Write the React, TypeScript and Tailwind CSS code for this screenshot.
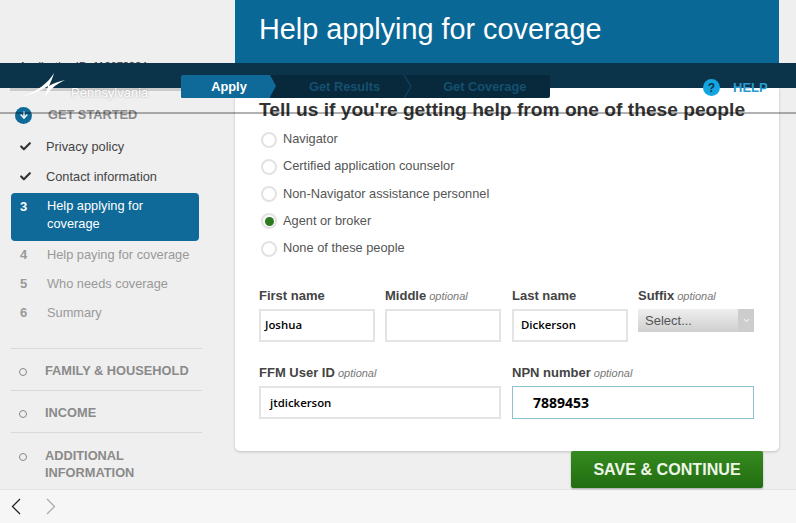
import { Check, ChevronDown, ArrowDown } from "lucide-react";

const font = "font-['Liberation_Sans',Arial,sans-serif]";
const hand = "font-['Open_Sans',sans-serif]";

function Radio({ label, checked }: { label: string; checked?: boolean }) {
  return (
    <div className="flex items-center h-[27.25px]">
      <span className="w-4 h-4 ml-[2px] rounded-full bg-white border-2 border-[#e2e2e2] flex items-center justify-center mr-[6px] shrink-0">
        {checked && <span className="w-[9px] h-[9px] rounded-full bg-[#2f7a1f]" />}
      </span>
      <span className="text-[12.8px] text-[#555] -mt-[2px]">{label}</span>
    </div>
  );
}

function Field({
  label,
  optional,
  value,
  className,
  inputClass,
}: {
  label: string;
  optional?: boolean;
  value?: string;
  className: string;
  inputClass?: string;
}) {
  return (
    <div className={className}>
      <div className="text-[13px] h-[23px] font-bold text-[#444] whitespace-nowrap">
        {label}
        {optional && <span className="font-normal italic text-[11px] text-[#777]"> optional</span>}
      </div>
      <div
        className={`h-[33px] bg-white border-2 border-[#e4e4e4] flex items-center text-[11.4px] font-semibold text-black ${hand} ${inputClass ?? "pl-[4px]"}`}
      >
        {value}
      </div>
    </div>
  );
}

function Step({ mark, label, muted }: { mark: React.ReactNode; label: string; muted?: boolean }) {
  return (
    <div className={`flex items-center ${muted ? "h-[29px] text-[#999]" : "h-[29.5px] text-[#444]"}`}>
      <span className={`w-[36px] text-[13px] font-bold ${muted ? "pl-[20px]" : "pl-[19px]"}`}>{mark}</span>
      <span className={`text-[12.8px] ${muted ? "pl-[11px]" : "pl-[10px]"}`}>{label}</span>
    </div>
  );
}

function Section({ lines, last }: { lines: string[]; last?: boolean }) {
  return (
    <div className={`mx-[11px] flex border-t border-[#d9d9d9] h-[42px] w-[191px] ${last ? "pt-[14px]" : "pt-[13px]"}`}>
      <span className="w-[8px] h-[8px] mt-[6px] ml-[8px] rounded-full border border-[#888] shrink-0" />
      <div className="ml-[18px] text-[12.8px] leading-[17px] font-bold text-[#8a8a8a]">
        {lines.map((l) => (
          <div key={l}>{l}</div>
        ))}
      </div>
    </div>
  );
}

export default function App() {
  return (
    <div className={`relative w-[796px] h-[523px] overflow-hidden bg-[#efefef] ${font}`}>
      <div className="flex h-[489px]">
        {/* Left nav */}
        <aside className="w-[235px] shrink-0">
          <div className="h-[58px]" />
          <div className="text-[11px] text-[#333] pl-[19px] h-[48px]">Application ID: 112672224</div>
          <div className="flex items-center h-[20px] mt-[-1px] pl-[15px]">
            <span className="w-[17px] h-[17px] rounded-full bg-[#0f6a99] flex items-center justify-center">
              <ArrowDown size={10} strokeWidth={3.5} className="text-white" />
            </span>
            <span className="ml-[16px] text-[12.8px] font-bold text-[#8a8a8a]">GET STARTED</span>
          </div>
          <div className="h-[7px]" />
          <Step mark={<Check size={13} strokeWidth={4} className="text-[#333]" />} label="Privacy policy" />
          <Step mark={<Check size={13} strokeWidth={4} className="text-[#333]" />} label="Contact information" />
          <div className="ml-[11px] w-[188px] h-[48px] mt-[2px] rounded-[4px] bg-[#0f6a99] text-white flex pt-[4px]">
            <span className="w-[25px] pl-[9px] text-[13px] font-bold leading-[18px] mt-[1px]">3</span>
            <span className="pl-[11px] text-[12.8px] leading-[18px]">
              Help applying for
              <br />
              coverage
            </span>
          </div>
          <div className="-mt-[1px]">
            <Step mark="4" label="Help paying for coverage" muted />
            <Step mark="5" label="Who needs coverage" muted />
            <Step mark="6" label="Summary" muted />
          </div>
          <div className="h-[21px]" />
          <Section lines={["FAMILY & HOUSEHOLD"]} />
          <Section lines={["INCOME"]} />
          <Section last lines={["ADDITIONAL", "INFORMATION"]} />
        </aside>

        {/* Main column */}
        <main className="w-[544px] shrink-0 relative">
          <div className="h-[88px] bg-[#0a6896] pl-[24px] pt-[12px]">
            <h1 className="text-[28.8px] leading-[34px] text-white">Help applying for coverage</h1>
          </div>
          <div className="h-[363px] bg-white rounded-b-[5px] shadow-[0_1px_3px_rgba(0,0,0,0.2)] px-[24px]">
            <h2 className="pt-[11px] text-[19.2px] leading-[22px] font-bold text-[#333] whitespace-nowrap">
              Tell us if you're getting help from one of these people
            </h2>
            <div className="mt-[5px]">
              <Radio label="Navigator" />
              <Radio label="Certified application counselor" />
              <Radio label="Non-Navigator assistance personnel" />
              <Radio label="Agent or broker" checked />
              <Radio label="None of these people" />
            </div>
            <div className="flex mt-[24px]">
              <Field label="First name" value="Joshua" className="w-[116px]" inputClass="pl-[4px] pb-[3px]" />
              <Field label="Middle" optional className="w-[116px] ml-[10px]" />
              <Field label="Last name" value="Dickerson" className="w-[116px] ml-[11px]" inputClass="pl-[7px] pb-[3px]" />
              <div className="w-[116px] ml-[10px]">
                <div className="text-[13px] h-[23px] font-bold text-[#444] whitespace-nowrap">
                  Suffix<span className="font-normal italic text-[11px] text-[#777]"> optional</span>
                </div>
                <div className="h-[23px] bg-gradient-to-b from-[#efefef] to-[#cfcfcf] flex items-center text-[13px] text-[#555] pl-[7px]">
                  <span className="flex-1">Select...</span>
                  <span className="w-[16px] self-stretch bg-[#cdcdcd] flex items-center justify-center">
                    <ChevronDown size={9} strokeWidth={3} className="text-[#eee]" />
                  </span>
                </div>
              </div>
            </div>
            <div className="flex mt-[21px]">
              <Field label="FFM User ID" optional value="jtdickerson" className="w-[242px]" inputClass="pl-[9px]" />
              <div className="w-[242px] ml-[11px]">
                <div className="text-[13px] h-[23px] font-bold text-[#444] whitespace-nowrap">
                  NPN number<span className="font-normal italic text-[11px] text-[#777]"> optional</span>
                </div>
                <div className={`h-[33px] bg-white border border-[#8fc0d0] flex items-center pl-[20px] text-[14px] font-bold text-black ${hand}`}>
                  7889453
                </div>
              </div>
            </div>
          </div>
          <div className="ml-[336px] w-[192px] h-[37px] rounded-[2px] bg-gradient-to-b from-[#358a1f] to-[#226e12] flex items-center justify-center text-[16.1px] font-bold text-[#eef6e8] shadow-[0_1px_2px_rgba(0,0,0,0.3)]">
            SAVE &amp; CONTINUE
          </div>
        </main>
      </div>

      {/* Browser toolbar */}
      <div className="h-[34px] bg-[#f6f6f6] border-t border-[#e3e3e3] flex items-center pl-[11px] gap-[25px]">
        <svg width="10" height="17" viewBox="0 0 10 17" fill="none" stroke="#222" strokeWidth="1.3">
          <path d="M9 1 L1.5 8.5 L9 16" />
        </svg>
        <svg width="10" height="17" viewBox="0 0 10 17" fill="none" stroke="#aaa" strokeWidth="1.3">
          <path d="M1 1 L8.5 8.5 L1 16" />
        </svg>
      </div>

      {/* Stray scan lines across the screenshot */}
      <div className="absolute left-0 right-0 top-[112px] h-[2px] bg-black/30" />
      <div className="absolute left-[10px] w-[225px] top-[88px] h-[3px] bg-black/15" />

      {/* Header bar sits over the page */}
      <div className="absolute left-0 right-0 top-[63px] h-[25px] bg-[#0b3349]">
        <svg className="absolute left-[20px] top-[10px]" width="46" height="25" viewBox="0 0 46 25">
          <path d="M34 0 C29 9 18 18 1 24 C13 21 22 17 28 13 L25 24 C29 18 34 12 45 7 C37 9 32 11 29 13 C31 8 33 4 34 0 Z" fill="#fff" />
        </svg>
        <span className="absolute left-[71px] top-[20px] text-[13px] text-white [text-shadow:0_0_2px_rgba(0,0,0,0.35)]">Pennsylvania</span>
        <div className="absolute left-[181px] top-[12px] h-[23px] w-[369px] rounded-[2px] bg-[#08293c] flex items-center text-[12.8px] font-bold">
          <div className="relative w-[89px] h-full rounded-l-[2px] bg-[#0f6a99] text-white flex items-center justify-center pl-[7px]">
            Apply
            <span className="absolute left-[89px] top-0 w-0 h-0 border-y-[11.5px] border-y-transparent border-l-[6px] border-l-[#0f6a99]" />
          </div>
          <span className="ml-[39px] text-[#14506f]">Get Results</span>
          <svg className="ml-[23px]" width="9" height="23" viewBox="0 0 9 23" fill="none" stroke="#0c4563" strokeWidth="1.2">
            <path d="M1 0 L8 11.5 L1 23" />
          </svg>
          <span className="ml-[31px] text-[#14506f]">Get Coverage</span>
        </div>
        <span className="absolute left-[703px] top-[16px] w-[17px] h-[17px] rounded-full bg-[#12a5e0] flex items-center justify-center text-[12px] font-bold text-[#0b3349]">?</span>
        <span className="absolute left-[733px] top-[15px] text-[13px] font-bold text-[#2a9ad0]">HELP</span>
      </div>
    </div>
  );
}
